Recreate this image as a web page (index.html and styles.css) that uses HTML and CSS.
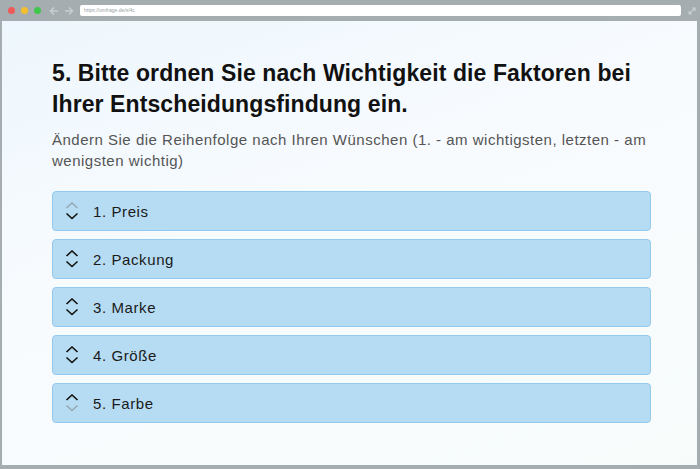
FILE: index.html
```html
<!DOCTYPE html>
<html lang="de">
<head>
<meta charset="utf-8">
<link rel="stylesheet" href="styles.css">
</head>
<body>
<div class="window">
  <div class="toolbar">
    <span class="dot red"></span>
    <span class="dot yellow"></span>
    <span class="dot green"></span>
    <svg class="nav" width="10" height="10" viewBox="0 0 10 10"><path d="M5 1.5 L1.5 5 L5 8.5 M1.5 5 H9" fill="none" stroke="#c9cfd2" stroke-width="1.4"/></svg>
    <svg class="nav" width="10" height="10" viewBox="0 0 10 10"><path d="M5 1.5 L8.5 5 L5 8.5 M8.5 5 H1" fill="none" stroke="#c9cfd2" stroke-width="1.4"/></svg>
    <div class="url">https://umfrage.de/s/4c</div>
    <svg class="expand" width="10" height="10" viewBox="0 0 10 10"><path d="M2 8 L8 2 M5 2 H8 V5 M2 5 V8 H5" fill="none" stroke="#c9cfd2" stroke-width="1.2"/></svg>
  </div>
  <div class="content">
    <h1 class="title">5. Bitte ordnen Sie nach Wichtigkeit die Faktoren bei Ihrer Entscheidungsfindung ein.</h1>
    <p class="hint">Ändern Sie die Reihenfolge nach Ihren Wünschen (1. - am wichtigsten, letzten - am wenigsten wichtig)</p>
    <ul class="list">
      <li class="item"><svg class="arrows" width="14" height="18" viewBox="0 0 14 18"><path class="off" d="M1.5 6 L7 1 L12.5 6"/><path d="M1.5 11.5 L7 16.5 L12.5 11.5"/></svg><span>1. Preis</span></li>
      <li class="item"><svg class="arrows" width="14" height="18" viewBox="0 0 14 18"><path d="M1.5 6 L7 1 L12.5 6"/><path d="M1.5 11.5 L7 16.5 L12.5 11.5"/></svg><span>2. Packung</span></li>
      <li class="item"><svg class="arrows" width="14" height="18" viewBox="0 0 14 18"><path d="M1.5 6 L7 1 L12.5 6"/><path d="M1.5 11.5 L7 16.5 L12.5 11.5"/></svg><span>3. Marke</span></li>
      <li class="item"><svg class="arrows" width="14" height="18" viewBox="0 0 14 18"><path d="M1.5 6 L7 1 L12.5 6"/><path d="M1.5 11.5 L7 16.5 L12.5 11.5"/></svg><span>4. Größe</span></li>
      <li class="item"><svg class="arrows" width="14" height="18" viewBox="0 0 14 18"><path d="M1.5 6 L7 1 L12.5 6"/><path class="off" d="M1.5 11.5 L7 16.5 L12.5 11.5"/></svg><span>5. Farbe</span></li>
    </ul>
  </div>
</div>
</body>
</html>
```
FILE: styles.css
```css
html, body {
  margin: 0;
  padding: 0;
}
body {
  width: 700px;
  height: 469px;
  overflow: hidden;
  font-family: "Liberation Sans", Arial, sans-serif;
}
.window {
  box-sizing: border-box;
  width: 700px;
  height: 469px;
  background: #a5adb1;
  padding: 0 3px 4px 2px;
  display: flex;
  flex-direction: column;
}
.toolbar {
  height: 21px;
  display: flex;
  align-items: center;
  flex-shrink: 0;
}
.dot {
  width: 7px;
  height: 7px;
  border-radius: 50%;
  margin-left: 6px;
}
.dot.red { background: #ee5a57; margin-left: 6px; }
.dot.yellow { background: #f4bf2d; }
.dot.green { background: #3fc74d; }
.nav {
  margin-left: 5px;
}
.nav:first-of-type { margin-left: 8px; }
.url {
  margin-left: 6px;
  width: 601px;
  height: 11px;
  background: #fff;
  border-radius: 2px;
  font-size: 5px;
  line-height: 11px;
  color: #9aa2a6;
  padding-left: 4px;
  box-sizing: border-box;
}
.expand {
  margin-left: 6px;
}
.content {
  flex: 1;
  background: linear-gradient(160deg, #eef7fd 0%, #f8fbfe 45%, #f7fcfb 100%);
  padding: 37px 40px 0 50px;
}
.title {
  margin: 0;
  font-size: 23px;
  font-weight: bold;
  line-height: 31px;
  color: #111;
  letter-spacing: 0.1px;
}
.hint {
  margin: 9px 0 0 0;
  font-size: 15px;
  line-height: 21px;
  color: #555;
  letter-spacing: 0.5px;
}
.list {
  list-style: none;
  margin: 20px 6px 0 0;
  padding: 0;
  display: flex;
  flex-direction: column;
  gap: 8px;
}
.item {
  box-sizing: border-box;
  height: 40px;
  background: #b6dcf3;
  border: 1px solid #93c9ec;
  border-radius: 4px;
  display: flex;
  align-items: center;
  padding-left: 12px;
  font-size: 15px;
  color: #1a1a1a;
  letter-spacing: 0.6px;
}
.arrows {
  margin-right: 14px;
}
.arrows path {
  fill: none;
  stroke: #111;
  stroke-width: 1.6;
}
.arrows path.off {
  stroke: #93a9b8;
}
```
